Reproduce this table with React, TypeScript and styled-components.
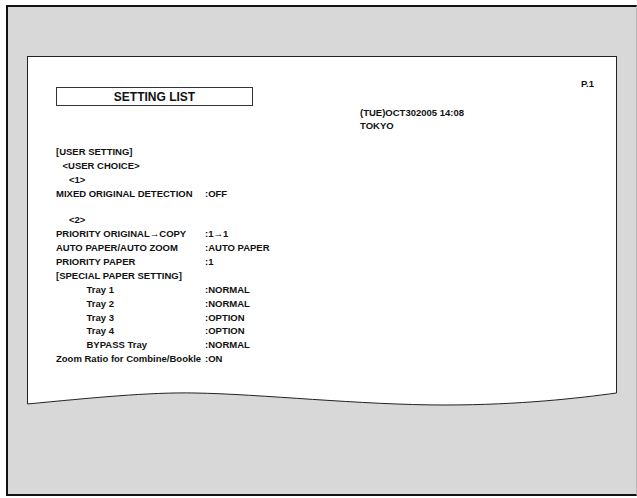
import React from "react";
import styled, { createGlobalStyle } from "styled-components";

const Global = createGlobalStyle`
  html, body { margin: 0; padding: 0; background: #ffffff; overflow: hidden; }
  body { font-family: "Liberation Sans", Arial, sans-serif; color: #111; }
`;

const Frame = styled.div`
  box-sizing: border-box;
  margin: 5px 0 0 6px;
  width: 631px;
  height: 491px;
  background: #d8d8d8;
  border-top: 2px solid #111;
  border-left: 2px solid #111;
  border-bottom: 2px solid #111;
  border-right: 1px solid #b8b8b8;
  padding: 49px 0 0 19px;
  display: flex;
  flex-direction: column;
`;

const PaperWrap = styled.div`
  width: 590px;
  display: flex;
  flex-direction: column;
`;

const Paper = styled.div`
  box-sizing: border-box;
  height: 334px;
  background: #ffffff;
  border: 1px solid #222;
  border-bottom: none;
  padding: 0 22px 0 28px;
  display: flex;
  flex-direction: column;
  font-weight: 700;
  font-size: 9.5px;
`;

const Header = styled.div`
  display: flex;
  align-items: flex-start;
`;

const TitleBox = styled.div`
  box-sizing: border-box;
  margin-top: 30px;
  width: 197px;
  height: 19px;
  border: 1px solid #333;
  display: flex;
  align-items: center;
  justify-content: center;
  font-size: 12px;
  font-weight: 700;
`;

const DateBlock = styled.div`
  margin-top: 49px;
  margin-left: 107px;
  line-height: 13px;
`;

const PageNo = styled.div`
  margin-top: 20px;
  margin-left: auto;
  line-height: 13.9px;
`;

const Body = styled.div`
  margin-top: 13px;
  display: flex;
  flex-direction: column;
`;

const Row = styled.div<{ $h?: number }>`
  display: grid;
  grid-template-columns: 149px auto;
  height: ${(p) => p.$h ?? 13.9}px;
  line-height: 13.9px;
  white-space: nowrap;
`;

const Label = styled.div<{ $indent?: number }>`
  padding-left: ${(p) => p.$indent ?? 0}px;
  overflow: visible;
`;

const Value = styled.div``;

const WaveSvg = styled.svg`
  display: block;
`;

type Item = { label: string; value?: string; indent?: number; h?: number };

const items: Item[] = [
  { label: "[USER SETTING]" },
  { label: "<USER CHOICE>", indent: 6.5 },
  { label: "<1>", indent: 13 },
  { label: "MIXED ORIGINAL DETECTION", value: "OFF" },
  { label: "", h: 12.8 },
  { label: "<2>", indent: 13 },
  { label: "PRIORITY ORIGINAL\u2192COPY", value: "1\u21921" },
  { label: "AUTO PAPER/AUTO ZOOM", value: "AUTO PAPER" },
  { label: "PRIORITY PAPER", value: "1" },
  { label: "[SPECIAL PAPER SETTING]" },
  { label: "Tray 1", value: "NORMAL", indent: 30.5 },
  { label: "Tray 2", value: "NORMAL", indent: 30.5 },
  { label: "Tray 3", value: "OPTION", indent: 30.5 },
  { label: "Tray 4", value: "OPTION", indent: 30.5 },
  { label: "BYPASS Tray", value: "NORMAL", indent: 30.5 },
  { label: "Zoom Ratio for Combine/Bookle", value: "ON" },
];

const wave =
  "C 63,8 123,2 168,3 C 233,4 333,15 418,15 C 493,15 553,8 589.5,3";

export default function App() {
  return (
    <>
      <Global />
      <Frame>
        <PaperWrap>
          <Paper>
            <Header>
              <TitleBox>SETTING LIST</TitleBox>
              <DateBlock>
                <div>(TUE)OCT302005 14:08</div>
                <div>TOKYO</div>
              </DateBlock>
              <PageNo>P.1</PageNo>
            </Header>
            <Body>
              {items.map((it, i) => (
                <Row key={i} $h={it.h}>
                  <Label $indent={it.indent}>{it.label}</Label>
                  <Value>{it.value !== undefined ? `:${it.value}` : ""}</Value>
                </Row>
              ))}
            </Body>
          </Paper>
          <WaveSvg width="590" height="17" viewBox="0 0 590 17">
            <path d={`M0.5,0 L0.5,14 ${wave} L589.5,0 Z`} fill="#ffffff" />
            <path
              d={`M0.5,0 L0.5,14 ${wave} L589.5,0`}
              fill="none"
              stroke="#222"
              strokeWidth="1"
            />
          </WaveSvg>
        </PaperWrap>
      </Frame>
    </>
  );
}
